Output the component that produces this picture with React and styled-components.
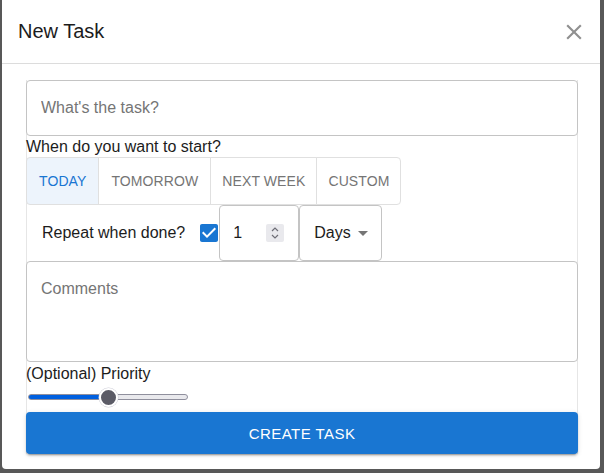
import { useState } from 'react';
import styled, { createGlobalStyle } from 'styled-components';

const GlobalStyle = createGlobalStyle`
  html, body {
    margin: 0;
    padding: 0;
    background: #585858;
    font-family: "Liberation Sans", Arial, sans-serif;
  }
  * {
    box-sizing: border-box;
  }
`;

const Backdrop = styled.div`
  width: 604px;
  height: 473px;
  padding: 0 4px 4px 2px;
  overflow: hidden;
`;

const Dialog = styled.div`
  width: 598px;
  height: 469px;
  background: #ffffff;
  border-radius: 0 0 4px 4px;
  display: flex;
  flex-direction: column;
`;

const Header = styled.div`
  height: 64px;
  padding: 0 18px 0 16px;
  display: flex;
  align-items: center;
  justify-content: space-between;
  border-bottom: 1px solid #dcdcdc;
`;

const Title = styled.h2`
  margin: 0;
  font-size: 20px;
  font-weight: 400;
  color: #1c1c1c;
`;

const CloseButton = styled.button`
  border: none;
  background: none;
  padding: 0;
  margin-right: -5px;
  width: 26px;
  height: 26px;
  color: #909090;
  cursor: pointer;
  display: flex;

  svg {
    width: 26px;
    height: 26px;
  }
`;

const Body = styled.div`
  padding: 16px 22px 15px 24px;
`;

const Form = styled.form`
  display: flex;
  flex-direction: column;
  border-left: 1px solid #e6e6e6;
  border-right: 1px solid #e6e6e6;
`;

const outlined = `
  border: 1px solid #c4c4c4;
  border-radius: 4px;
  background: #ffffff;
  font-family: "Liberation Sans", Arial, sans-serif;
  font-size: 16px;
  color: #1c1c1c;
  outline: none;
`;

const TaskInput = styled.input`
  ${outlined}
  height: 56px;
  margin: 0 -1px;
  padding: 0 14px;

  &::placeholder {
    color: #757575;
  }
`;

const Label = styled.div`
  font-size: 16px;
  line-height: 21px;
  color: #1c1c1c;
  margin-left: -1px;
`;

const ToggleGroup = styled.div`
  display: flex;
  align-self: flex-start;
  margin-left: -1px;
`;

const ToggleButton = styled.button`
  height: 48px;
  padding: 0 ${props => props.pad || '11px'};
  margin-left: ${props => (props.first ? '0' : '-1px')};
  border: 1px solid #e0e0e0;
  border-radius: ${props =>
    props.first ? '4px 0 0 4px' : props.last ? '0 4px 4px 0' : '0'};
  background: ${props => (props.selected ? '#edf4fc' : '#ffffff')};
  color: ${props => (props.selected ? '#1976d2' : '#757575')};
  font-family: "Liberation Sans", Arial, sans-serif;
  font-size: 14px;
  letter-spacing: 0.1px;
  text-transform: uppercase;
  cursor: pointer;
`;

const RepeatRow = styled.div`
  display: flex;
  align-items: center;
  height: 56px;
`;

const RepeatText = styled.span`
  margin-left: 15px;
  font-size: 16px;
  color: #1c1c1c;
`;

const CheckBox = styled.span`
  width: 24px;
  height: 24px;
  margin: 0 -2px 0 12px;
  color: #1976d2;
  display: flex;
  cursor: pointer;

  svg {
    width: 24px;
    height: 24px;
  }
`;

const NumberField = styled.div`
  ${outlined}
  width: 80px;
  height: 56px;
  padding: 0 14px 0 13px;
  display: flex;
  align-items: center;
`;

const Spinner = styled.span`
  margin-left: auto;
  width: 18px;
  height: 18px;
  border-radius: 2px;
  background: #e9e9ed;
  display: flex;
  align-items: center;
  justify-content: center;
  color: #6e6e76;
`;

const SelectField = styled.div`
  ${outlined}
  width: 83px;
  height: 56px;
  padding: 0 0 0 14px;
  display: flex;
  align-items: center;
  justify-content: space-between;

  svg {
    width: 24px;
    height: 24px;
    margin-right: 6px;
    color: #757575;
  }
`;

const Comments = styled.textarea`
  ${outlined}
  height: 101px;
  margin: 0 -1px;
  padding: 16px 14px;
  line-height: 22px;
  resize: none;

  &::placeholder {
    color: #757575;
  }
`;

const PriorityLabel = styled(Label)`
  margin-top: 1px;
  line-height: 22px;
`;

const SliderRow = styled.div`
  height: 24px;
  padding-left: 1px;
  display: flex;
  align-items: center;
`;

const Range = styled.input`
  -webkit-appearance: none;
  appearance: none;
  width: 160px;
  height: 6px;
  margin: 0;
  border: 1px solid #8f8f9d;
  border-radius: 3px;
  background: ${props =>
    `linear-gradient(to right, #0060df 0%, #0060df ${props.pct}%, #e9e9ed ${props.pct}%, #e9e9ed 100%)`};
  outline: none;

  &::-webkit-slider-thumb {
    -webkit-appearance: none;
    width: 19px;
    height: 19px;
    border-radius: 50%;
    background: #5b5b66;
    border: 2px solid #ffffff;
    box-shadow: 0 0 0 0.5px #cfcfd8;
    cursor: pointer;
  }
`;

const SubmitButton = styled.button`
  margin: 3px -1px 0;
  height: 42px;
  border: none;
  border-radius: 4px;
  background: #1976d2;
  color: #ffffff;
  font-family: "Liberation Sans", Arial, sans-serif;
  font-size: 15px;
  letter-spacing: 0.46px;
  text-transform: uppercase;
  box-shadow: 0 3px 1px -2px rgba(0, 0, 0, 0.2), 0 2px 2px 0 rgba(0, 0, 0, 0.14),
    0 1px 5px 0 rgba(0, 0, 0, 0.12);
  cursor: pointer;
`;

const starts = [
  { key: 'today', pad: '12px' },
  { key: 'tomorrow', pad: '12px' },
  { key: 'next week' },
  { key: 'custom' },
];

const App = () => {
  const [start, setStart] = useState('today');
  const [priority, setPriority] = useState(50);

  return (
    <>
      <GlobalStyle />
      <Backdrop>
        <Dialog>
          <Header>
            <Title>New Task</Title>
            <CloseButton aria-label='close'>
              <svg viewBox='0 0 24 24' fill='currentColor'>
                <path d='M19 6.41 17.59 5 12 10.59 6.41 5 5 6.41 10.59 12 5 17.59 6.41 19 12 13.41 17.59 19 19 17.59 13.41 12z' />
              </svg>
            </CloseButton>
          </Header>
          <Body>
            <Form onSubmit={e => e.preventDefault()}>
              <TaskInput placeholder="What's the task?" />
              <Label>When do you want to start?</Label>
              <ToggleGroup>
                {starts.map((s, i) => (
                  <ToggleButton
                    key={s.key}
                    type='button'
                    pad={s.pad}
                    first={i === 0}
                    last={i === starts.length - 1}
                    selected={start === s.key}
                    onClick={() => setStart(s.key)}>
                    {s.key}
                  </ToggleButton>
                ))}
              </ToggleGroup>
              <RepeatRow>
                <RepeatText>Repeat when done?</RepeatText>
                <CheckBox>
                  <svg viewBox='0 0 24 24' fill='currentColor'>
                    <path d='M19 3H5c-1.11 0-2 .9-2 2v14c0 1.1.89 2 2 2h14c1.11 0 2-.9 2-2V5c0-1.1-.89-2-2-2zm-9 14l-5-5 1.41-1.41L10 14.17l7.59-7.59L19 8l-9 9z' />
                  </svg>
                </CheckBox>
                <NumberField>
                  1
                  <Spinner>
                    <svg width='10' height='14' viewBox='0 0 10 14' fill='none' stroke='currentColor' strokeWidth='1.2'>
                      <path d='M2 5 5 2 8 5' />
                      <path d='M2 9 5 12 8 9' />
                    </svg>
                  </Spinner>
                </NumberField>
                <SelectField>
                  Days
                  <svg viewBox='0 0 24 24' fill='currentColor'>
                    <path d='M7 10l5 5 5-5z' />
                  </svg>
                </SelectField>
              </RepeatRow>
              <Comments placeholder='Comments' />
              <PriorityLabel>(Optional) Priority</PriorityLabel>
              <SliderRow>
                <Range
                  type='range'
                  min='0'
                  max='100'
                  value={priority}
                  pct={priority}
                  onChange={e => setPriority(Number(e.target.value))}
                />
              </SliderRow>
              <SubmitButton type='submit'>Create Task</SubmitButton>
            </Form>
          </Body>
        </Dialog>
      </Backdrop>
    </>
  );
};

export default App;
